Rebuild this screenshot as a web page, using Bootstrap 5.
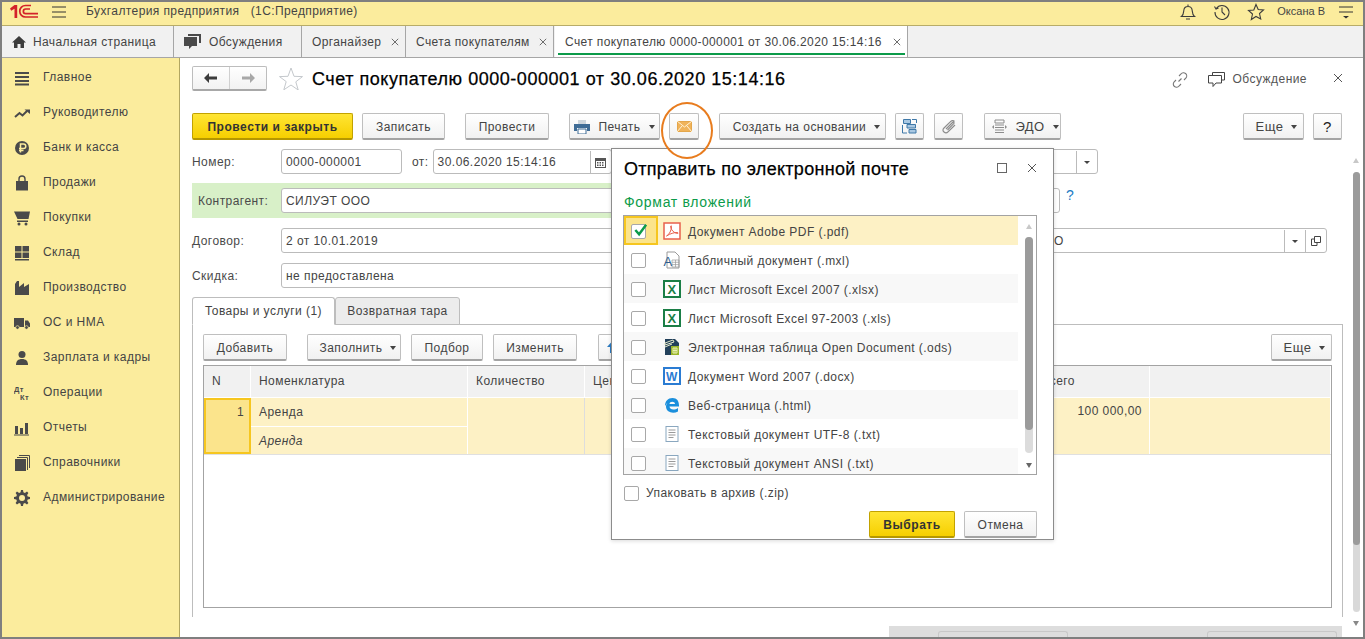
<!DOCTYPE html>
<html lang="ru">
<head>
<meta charset="utf-8">
<title>Счет покупателю</title>
<link rel="stylesheet" href="https://cdn.jsdelivr.net/npm/bootstrap@5.3.0/dist/css/bootstrap.min.css">
<style>
html,body{height:100%;overflow:hidden}
body{font-family:"Liberation Sans",Arial,sans-serif;font-size:12px;letter-spacing:.45px;color:#444;background:#fff;line-height:1.2}
.win{height:639px;width:1365px;border:2px solid #7f7f7f;overflow:hidden;position:relative}
.topbar{height:24px;background:#fbec9d;border-bottom:1px solid #b8ac68;font-size:12px;padding:0 0 4px 8px;letter-spacing:.4px}
.logo1c{width:28px;height:15px}
.burger{width:14px;height:12px;margin:0 20px 0 14px}
.ttl{white-space:pre}
.uname{margin:0 14px 0 12px;letter-spacing:0;font-size:11px}
.ticon{width:18px;height:18px;margin-left:16px;color:#3c3c3c}
.menui{margin-right:10px}
.tabbar{height:32px;background:#f1f1f1;border-bottom:1px solid #a6a6a6;font-size:12px;letter-spacing:.38px}
.tabi{height:31px;border-right:1px solid #a6a6a6;padding:1px 0 0 10px;position:relative;white-space:nowrap}
.t1{width:172px}.t2{width:128px}.t3{width:104px}.t4{width:148px}
.t5{width:353px;background:#fff;margin-left:1px;padding-left:10px}
.t5::after{content:"";position:absolute;left:3px;right:2px;bottom:2px;height:2px;background:#0c9b4a}
.tabi svg{margin-right:8px}
.t1 svg{margin-right:7px}
.tabi svg.tabx{color:#666;margin-left:auto;margin-right:6px;flex:none}
.mainrow{height:579px}
.side{width:178px;flex:none;background:#fbec9d;border-right:1px solid #b2a661;padding-top:2px}
.sitem{height:35px;padding-left:12px;font-size:12px;white-space:nowrap}
.sitem svg{width:16px;height:16px;margin-right:13px;color:#4a4a4a;flex:none}
.work{width:1183px;padding-left:12px;position:relative;flex:none}
.hdr{height:25px;margin-top:8px;width:1151px}
.navgrp{width:75px;height:25px;border:1px solid #bdbdbd;border-bottom:2px solid #a8a8a8;border-radius:2px;background:linear-gradient(#fff,#f2f2f2)}
.navgrp>span{flex:1}
.navgrp>span+span{border-left:1px solid #d0d0d0}
.star{width:24px;height:23px;margin:0 9px 0 12px}
.doctitle{font-size:18px;color:#000;font-weight:400;-webkit-text-stroke:.25px #000;letter-spacing:.54px;margin:1px 0 0;white-space:nowrap;line-height:25px}
.hright{margin:2px 0 0 auto;color:#555}
.hright svg{flex:none}
.lnk{margin-right:20px}
.closex{margin:-3px 0 0 26px}
.btb{margin-top:22px;height:27px;width:1150px}
.bt1.btn{--bs-btn-padding-x:0;--bs-btn-padding-y:0;--bs-btn-font-size:12px;--bs-btn-line-height:1;--bs-btn-color:#444;--bs-btn-border-radius:2px;letter-spacing:.45px;height:27px;padding-top:1px;border:1px solid #bfbfbf;border-bottom:2px solid #a3a3a3;background:linear-gradient(#fff,#f1f1f1);display:inline-flex;align-items:center;justify-content:center;flex:none;white-space:nowrap}
.bt1.act{background:linear-gradient(#ffe534,#f6cf00);border:1px solid #c2a200;border-bottom:2px solid #b59700;color:#333;font-weight:700;letter-spacing:.55px}
.bt1.pl8{padding-left:8px}
.bt1.big{font-size:13px;padding-left:6px}
.qbtn{font-size:15px;color:#222}
.caretx{width:0;height:0;border:solid transparent;border-width:4px 3.5px 0;border-top-color:#444;margin-left:8px;display:inline-block}
.ml9{margin-left:9px}.ml20{margin-left:20px}.ml10{margin-left:10px}.ml21{margin-left:21px}
.w161{width:161px}.w83{width:83px}.w84{width:84px}.w91{width:91px}.w30{width:30px}.w167{width:167px}.w77{width:77px}.w61{width:61px}.w29{width:29px}.w72{width:72px}.w94{width:94px}.w73{width:73px}.w86{width:86px}
.auto{margin-left:auto}
.frow{margin-top:10px;height:25px;width:1135px}
.fr1{margin-top:9px;width:906px}
.lbl{width:89px;flex:none;color:#4a4a4a;padding-top:1px}
.fld{height:25px;border:1px solid #bbb;border-radius:3px;background:#fff;padding:1px 0 0 4px;color:#444;white-space:nowrap;flex:none;overflow:hidden}
.f120{width:121px}.f170{width:179px}.fsk{width:700px}
.fot{margin:1px 4px 0 10px}
.fbtn{height:100%;width:21px;border-left:1px solid #bbb;margin-left:auto;flex:none;display:flex;align-items:center;justify-content:center}
.fcar{width:0;height:0;border:solid transparent;border-width:3.5px 3px 0;border-top-color:#444}
.band{background:#d8f0c8;height:35px;margin-top:9px;width:848px;position:relative;padding-left:6px}
.band .lbl{width:83px}
.fkon{width:779px}
.qm{color:#1c7cc4;font-size:14px;position:absolute;left:874px;top:4px}
.fdog{width:1046px}
.dtext{width:768px;flex:none}
.tabsrow{margin-top:9px;height:28px;position:relative;z-index:1;font-size:12px}
.tb{height:28px;display:flex;align-items:center;justify-content:center;border:1px solid #bdbdbd;border-radius:3px 3px 0 0}
.tba{width:143px;background:#fff;border-bottom-color:#fff}
.tbb{width:125px;background:#ececec}
.panel{width:1151px;height:293px;border-top:1px solid #bdbdbd;border-left:1px solid #bdbdbd;border-right:1px solid #bdbdbd;margin-top:-1px;padding:9px 10px 0}
.ptb{height:27px}
.upa{margin-right:auto;margin-left:8px}
.bt1.lft{justify-content:flex-start}
.grid{width:1129px;height:243px;border:1px solid #a3a3a3;margin-top:4px;background:#fff}
.ghead{height:31px;background:#f1f1f1;margin-bottom:1px}
.ghead>div{border-right:1px solid #fff;padding-left:8px;height:100%;display:flex;align-items:center;flex:none}
.c1{width:47px}.c2{width:217px}.c3{width:117px}.c4{width:565px}.c5{width:181px}
.grow{height:56px;background:#fdf1c5;position:relative}
.grow>div{flex:none;height:100%;border-right:1px solid #fff}
.gn{background:#fbe48c;border:2px solid #f6c61f!important;text-align:right;padding:5px 5px 0 0}
.gname>div{height:28px;display:flex;align-items:center;padding-left:8px}
.gname>div+div{border-top:1px solid #fff;font-style:italic;padding-top:1px}
.gcol{border-right:1px solid #ddd!important}
.gsum{text-align:right;padding:6px 7px 0 0}
.gline{height:1px;background:#e0e0e0}
.sp72{width:74px;flex:none}
.botbar{position:absolute;left:709px;top:568px;width:453px;height:11px;background:#ddd}
.botbar i{position:absolute;top:5px;width:130px;height:6px;border:1px solid #c8c8c8;border-bottom:0;border-radius:3px 3px 0 0}
.bi1{left:49px}.bi2{left:318px}
.vsb{width:7px;height:100%;position:absolute;left:1173px;top:0}
.arrup,.arrdn{position:absolute;left:0;width:0;height:0;border:solid transparent;border-width:0 3.5px 5px;border-bottom-color:#c8c8c8}
.arrdn{border-width:5px 3.5px 0;border-top-color:#888;border-bottom-color:transparent}
.au1{top:100px}.ad1{top:563px}
.th1,.th2{position:absolute;left:0;width:7px;border-radius:3.5px}
.th1{top:114px;height:373px;background:#9b9b9b;z-index:2}
.th2{top:114px;height:440px;background:#d9d9d9}
.dlg{position:absolute;left:431px;top:90px;width:443px;height:392px;background:#fff;border:1px solid #8c8c8c;padding:0 16px 0 11px;z-index:5;box-shadow:0 1px 4px rgba(0,0,0,.15)}
.dtitle{font-size:18px;color:#000;font-weight:400;-webkit-text-stroke:.25px #000;letter-spacing:.29px;line-height:22px;margin:9px 0 0 1px;white-space:nowrap}
.dhead{height:31px}
.dctl{margin-left:auto;color:#666;margin-top:14px}
.dmax{width:10px;height:10px;border:1px solid #666;margin-right:20px;display:block}
.dsub{color:#0c9b4a;font-size:14px;letter-spacing:.7px;margin:12px 0 0 1px;line-height:20px}
.lst{width:414px;height:260px;border:1px solid #a3a3a3;margin-top:3px;position:relative;overflow:hidden}
.lrow{height:29px;width:394px;font-size:12px;padding:1px 0 0 7px;position:relative}
.lrow:nth-child(even){background:#fff}
.lrow:nth-child(odd){background:#f8f8f8}
.lrow.sel{background:#fdf1c5}
.lrow svg.ic{width:18px;height:18px;margin:0 7px 0 17px;flex:none}
.ltx{padding-top:2px}
.cbx{width:15px;height:15px;border:1px solid #a8a8a8;border-radius:2px;background:#fff;flex:none;position:relative}
.selcell{position:absolute;left:0;top:0;width:34px;height:29px;background:#fbe48c;border:2px solid #f6c61f}
.chk{position:absolute;left:1px;top:-3px;width:15px;height:16px}
.lsb{position:absolute;left:401px;top:0;width:8px;height:258px}
.lsb b{position:absolute;left:0;width:8px;border-radius:4px}
.ls1{top:21px;height:193px;background:#9b9b9b;z-index:1}
.ls2{top:21px;height:216px;background:#dcdcdc}
.lau,.lad{position:absolute;left:1px;width:0;height:0;border:solid transparent}
.lau{top:8px;border-width:0 3px 5px;border-bottom-color:#c8c8c8}
.lad{top:247px;border-width:5px 3px 0;border-top-color:#666}
.zip{margin:10px 0 0 1px;height:16px}
.zip .cbx{margin-right:7px}
.dfoot{margin-top:10px;width:414px}
.circ{position:absolute;left:481px;top:44px;width:52px;height:57px;border:2px solid #e87c1e;border-radius:50%;z-index:6;pointer-events:none}
.gl{font-family:"Liberation Sans",sans-serif;font-weight:700}
</style>
</head>
<body>
<svg width="0" height="0" class="position-absolute">
<defs>
<symbol id="x" viewBox="0 0 10 10"><path d="M1 1l8 8M9 1l-8 8" stroke="currentColor" stroke-width="1.2" fill="none"/></symbol>
<symbol id="ixls" viewBox="0 0 18 18"><rect x="1" y="1" width="16" height="16" fill="#fff" stroke="#1b7e46" stroke-width="2"/><text x="9" y="14" text-anchor="middle" font-size="13" class="gl" fill="#1b7e46">X</text></symbol>
<symbol id="itxt" viewBox="0 0 18 18"><rect x="3" y="1.500" width="12" height="15" fill="#fff" stroke="#8aa7bf"/><path d="M5.500 5h7M5.500 7.500h7M5.500 10h7M5.500 12.500h5" stroke="#9a9a9a"/></symbol>
</defs>
</svg>
<div class="win d-flex flex-column">
  <div class="topbar d-flex align-items-center">
    <svg class="logo1c" viewBox="0 0 28 15"><path d="M0 4.500L4.500 1h2.700v13H4.500V4.800L1.200 6.800z" fill="#d3222a"/><path d="M21 1.500h-5.500a5.700 5.700 0 0 0 0 11.500H28M20 5h-4.300a2.200 2.200 0 0 0 0 4.700H28" fill="none" stroke="#d3222a" stroke-width="1.700"/></svg>
    <svg class="burger" viewBox="0 0 14 12"><path d="M0 1h14M0 6h14M0 11h14" stroke="#333" stroke-width="1"/></svg>
    <span class="ttl">Бухгалтерия предприятия   (1С:Предприятие)</span>
    <div class="ms-auto d-flex align-items-center">
      <svg class="ticon" viewBox="0 0 18 18"><path d="M2.500 13.500c2-1.500 2-3 2.300-6C5 5 6.500 3.500 9 3.500s4 1.500 4.200 4c.3 3 .3 4.500 2.300 6zM9 1.500v2M7 16h4" fill="none" stroke="currentColor" stroke-width="1.100"/></svg>
      <svg class="ticon" viewBox="0 0 18 18"><path d="M3.200 5.500A7 7 0 1 1 2 9M1.500 3.500l1.500 2.500 2.500-1M9 4.500V9l3 3" fill="none" stroke="currentColor" stroke-width="1.100"/></svg>
      <svg class="ticon" viewBox="0 0 18 18"><path d="M9 1.500l2.200 5 5.300.5-4 3.500 1.200 5.500L9 13.500 4.300 16.500l1.200-5.500-4-3.500 5.300-.5z" fill="none" stroke="currentColor" stroke-width="1.100"/></svg>
      <span class="uname">Оксана В</span>
      <svg class="menui" width="14" height="14" viewBox="0 0 14 14"><path d="M0 2h14M0 7h14" stroke="#333"/><path d="M4 11h6l-3 2.500z" fill="#333"/></svg>
    </div>
  </div>
  <div class="tabbar d-flex">
    <div class="tabi t1 d-flex align-items-center"><svg width="14" height="14" viewBox="0 0 14 14"><path d="M7 1L0 7.500h2V13h3.500V9h3v4H12V7.500h2z" fill="#3c3c3c"/></svg><span>Начальная страница</span></div>
    <div class="tabi t2 d-flex align-items-center"><svg width="17" height="16" viewBox="0 0 17 16"><path d="M4 0h13v9h-2V2H4zM0 3h13v9H8l-3 3v-3H0z" fill="#4a4a4a"/></svg><span>Обсуждения</span></div>
    <div class="tabi t3 d-flex align-items-center"><span>Органайзер</span><svg class="tabx" width="8" height="8"><use href="#x"/></svg></div>
    <div class="tabi t4 d-flex align-items-center"><span>Счета покупателям</span><svg class="tabx" width="8" height="8"><use href="#x"/></svg></div>
    <div class="tabi t5 d-flex align-items-center"><span>Счет покупателю 0000-000001 от 30.06.2020 15:14:16</span><svg class="tabx" width="8" height="8"><use href="#x"/></svg></div>
  </div>
  <div class="mainrow d-flex">
    <nav class="side d-flex flex-column">
      <div class="sitem d-flex align-items-center"><svg viewBox="0 0 16 16"><path d="M1 2h14v2H1zM1 6h14v2H1zM1 10h14v2H1zM1 13.500h14v2H1z" fill="currentColor"/></svg>Главное</div>
      <div class="sitem d-flex align-items-center"><svg viewBox="0 0 16 16"><path d="M1 12l4.500-4 3 2.500L13 6" fill="none" stroke="currentColor" stroke-width="2"/><path d="M10.500 4.500H16V9z" fill="currentColor"/></svg>Руководителю</div>
      <div class="sitem d-flex align-items-center"><svg viewBox="0 0 16 16"><circle cx="8" cy="8" r="7" fill="currentColor"/><path d="M6.500 12.500V4h3a2.300 2.300 0 0 1 0 4.600h-4.500M5 10.500h4.500" fill="none" stroke="#fbec9d" stroke-width="1.500"/></svg>Банк и касса</div>
      <div class="sitem d-flex align-items-center"><svg viewBox="0 0 16 16"><path d="M2 6h12v9.500H2z" fill="currentColor"/><path d="M5 7V4a3 3 0 0 1 6 0v3" fill="none" stroke="currentColor" stroke-width="1.400"/></svg>Продажи</div>
      <div class="sitem d-flex align-items-center"><svg viewBox="0 0 16 16"><path d="M0 1.500h16L14.500 9H3.500zM3 10.500h11V12H3z" fill="currentColor"/><circle cx="5" cy="14" r="1.500" fill="currentColor"/><circle cx="12" cy="14" r="1.500" fill="currentColor"/></svg>Покупки</div>
      <div class="sitem d-flex align-items-center"><svg viewBox="0 0 16 16"><path d="M1 1h6.500v5.500H1zM8.500 1H15v5.500H8.500zM1 7.500h6.500V13H1zM8.500 7.500H15V13H8.500zM1 14h14v1.500H1z" fill="currentColor"/></svg>Склад</div>
      <div class="sitem d-flex align-items-center"><svg viewBox="0 0 16 16"><path d="M1 15V4l2-3h2v6l5-4v4l5-3v11z" fill="currentColor"/></svg>Производство</div>
      <div class="sitem d-flex align-items-center"><svg viewBox="0 0 16 16"><path d="M0 3h10v9H0zM11 5.500h3l2 3V12h-5z" fill="currentColor"/><circle cx="3.500" cy="12.500" r="1.800" fill="currentColor" stroke="#fbec9d" stroke-width=".7"/><circle cx="12.500" cy="12.500" r="1.800" fill="currentColor" stroke="#fbec9d" stroke-width=".7"/></svg>ОС и НМА</div>
      <div class="sitem d-flex align-items-center"><svg viewBox="0 0 16 16"><circle cx="8" cy="4.500" r="3.500" fill="currentColor"/><path d="M2 15c0-4 2-6 6-6s6 2 6 6z" fill="currentColor"/></svg>Зарплата и кадры</div>
      <div class="sitem d-flex align-items-center"><svg viewBox="0 0 16 16"><text x="0" y="7" font-size="7.500" class="gl" fill="currentColor">Дт</text><text x="6" y="15" font-size="7.500" class="gl" fill="currentColor">Кт</text></svg>Операции</div>
      <div class="sitem d-flex align-items-center"><svg viewBox="0 0 16 16"><path d="M1 6h3v8H1zM6 8h3v6H6zM11 3h3v11h-3zM0 14.500h15v1H0z" fill="currentColor"/></svg>Отчеты</div>
      <div class="sitem d-flex align-items-center"><svg viewBox="0 0 16 16"><path d="M1 4h11v12H1z" fill="currentColor"/><path d="M3 2.500h10.500V15M5 .5h10.500V13" fill="none" stroke="currentColor"/></svg>Справочники</div>
      <div class="sitem d-flex align-items-center"><svg viewBox="0 0 16 16"><path d="M7 0h2l.4 2.300 1.500.6L13 1.600l1.400 1.400-1.300 2 .6 1.500 2.300.5v2l-2.300.4-.6 1.500 1.300 2.100-1.400 1.400-2.100-1.300-1.500.6L9 16H7l-.4-2.300-1.500-.6-2.100 1.300-1.400-1.400 1.300-2.100-.6-1.500L0 9V7l2.300-.5.6-1.500-1.300-2L3 1.600l2.100 1.300 1.500-.6z" fill="currentColor"/><circle cx="8" cy="8" r="3" fill="#fbec9d"/></svg>Администрирование</div>
    </nav>
    <main class="work">
      <div class="hdr d-flex align-items-center">
        <div class="navgrp d-flex">
          <span class="d-flex align-items-center justify-content-center"><svg width="14" height="10" viewBox="0 0 14 10"><path d="M0 5l5-5v3.500h8v3H5V10z" fill="#3c3c3c"/></svg></span>
          <span class="d-flex align-items-center justify-content-center"><svg width="14" height="10" viewBox="0 0 14 10"><path d="M14 5L9 0v3.500H1v3h8V10z" fill="#a8a8a8"/></svg></span>
        </div>
        <svg class="star" viewBox="0 0 24 23"><path d="M12 1l3 8.300 8.500.3-6.700 5.200 2.400 8.200L12 18l-7.200 4.800 2.400-8.200L.5 9.600 9 9.300z" fill="#fff" stroke="#c4c8cc"/></svg>
        <h1 class="doctitle">Счет покупателю 0000-000001 от 30.06.2020 15:14:16</h1>
        <div class="hright d-flex align-items-center">
          <svg class="lnk" width="16" height="16" viewBox="0 0 16 16"><path d="M6.500 9.500l3-3M7 4l2-2a3 3 0 0 1 5 4l-2 2M9 12l-2 2a3 3 0 0 1-5-4l2-2" fill="none" stroke="#777" stroke-width="1.100"/></svg>
          <svg class="me-2" width="17" height="16" viewBox="0 0 17 16"><path d="M4.500 3V.5h12V8H14M.5 3.500h13V11H8l-3 3.500V11H.5z" fill="#fff" stroke="#444"/></svg>
          <span>Обсуждение</span>
          <svg class="closex" width="10" height="10" viewBox="0 0 10 10"><path d="M1 1l8 8M9 1l-8 8" stroke="#555"/></svg>
        </div>
      </div>
      <div class="btb d-flex">
        <button type="button" class="btn bt1 act w161">Провести и закрыть</button>
        <button type="button" class="btn bt1 w83 ml9">Записать</button>
        <button type="button" class="btn bt1 w84 ml20">Провести</button>
        <button type="button" class="btn bt1 w91 ml20"><svg class="me-2" width="16" height="14" viewBox="0 0 16 14"><path d="M4 0h8v4H4z" fill="#cfd6dc"/><path d="M0 4h16v7h-3V8H3v3H0z" fill="#3f6c96"/><path d="M4 9h8v5H4z" fill="#fff" stroke="#3f6c96"/></svg>Печать<i class="caretx"></i></button>
        <button type="button" class="btn bt1 w30 ml9"><svg width="15" height="11" viewBox="0 0 15 11"><rect width="15" height="11" fill="#f0b35a" stroke="#d89a3c"/><path d="M0 0l7.500 6L15 0M0 11l5-6M15 11l-5-6" fill="none" stroke="#fff3d8"/></svg></button>
        <button type="button" class="btn bt1 w167 ml20 pl8">Создать на основании<i class="caretx"></i></button>
        <button type="button" class="btn bt1 w29 ml9"><svg width="15" height="15" viewBox="0 0 15 15"><path d="M1.500.5h7v4h-7zM5 5.500h8.500v3.500H5zM7 10.500h7v3.500H7z" fill="#a9c8e2" stroke="#3f78a8"/><path d="M.5 6v8H5M10 .5h4.500V4" fill="none" stroke="#3f78a8"/></svg></button>
        <button type="button" class="btn bt1 w29 ml10"><svg width="14" height="15" viewBox="0 0 14 15"><path d="M12.500 2.500c-1-1.200-2.700-1.200-3.700-.2L2 9c-1.500 1.500-1.200 3 0 4s2.700 1.200 4-.2L13 6M4 10l6.500-6.500c1-1 2.200.2 1.200 1.200L5.500 11" fill="none" stroke="#8c8c8c" stroke-width="1.200"/></svg></button>
        <button type="button" class="btn bt1 big w77 ml21"><svg class="me-2" width="15" height="15" viewBox="0 0 15 15"><path d="M3 1h9v3H3zM3 6h9M3 8.500h9M3 11h9M3 13.500h9" fill="none" stroke="#8c8c8c"/><path d="M0 8l2-2v4zM15 8l-2-2v4z" fill="#8c8c8c"/></svg>ЭДО<i class="caretx"></i></button>
        <button type="button" class="btn bt1 big w61 auto">Еще<i class="caretx"></i></button>
        <button type="button" class="btn bt1 w29 ml9"><span class="qbtn">?</span></button>
      </div>
      <div class="frow fr1 d-flex align-items-center">
        <span class="lbl">Номер:</span>
        <div class="fld f120 d-flex align-items-center">0000-000001</div>
        <span class="fot">от:</span>
        <div class="fld f170 d-flex align-items-center">30.06.2020 15:14:16<span class="fbtn"><svg width="11" height="11" viewBox="0 0 11 11"><path d="M0 1h11v10H0z" fill="#555"/><path d="M1 4h9v6H1z" fill="#fff"/><path d="M2 5h1.500v1.500H2zM4.500 5H6v1.500H4.500zM7 5h1.500v1.500H7zM2 7.500h1.500V9H2zM4.500 7.500H6V9H4.500zM7 7.500h1.500V9H7z" fill="#555"/></svg></span></div>
        <div class="fld auto d-flex align-items-center f170"><span class="fbtn"><i class="fcar"></i></span></div>
      </div>
      <div class="band d-flex align-items-center">
        <span class="lbl">Контрагент:</span>
        <div class="fld fkon d-flex align-items-center">СИЛУЭТ ООО</div>
        <span class="qm">?</span>
      </div>
      <div class="frow d-flex align-items-center">
        <span class="lbl">Договор:</span>
        <div class="fld fdog d-flex align-items-center"><span class="dtext">2 от 10.01.2019</span><span>О</span>
          <span class="fbtn"><i class="fcar"></i></span><span class="fbtn ms-0"><svg width="10" height="10" viewBox="0 0 10 10"><path d="M3.500.5h6v6h-6zM3.500 3H.5v6.500H6V7" fill="none" stroke="#444"/></svg></span></div>
      </div>
      <div class="frow d-flex align-items-center">
        <span class="lbl">Скидка:</span>
        <div class="fld fsk d-flex align-items-center">не предоставлена</div>
      </div>
      <div class="tabsrow d-flex">
        <div class="tb tba">Товары и услуги (1)</div>
        <div class="tb tbb">Возвратная тара</div>
      </div>
      <section class="panel">
        <div class="ptb d-flex">
          <button type="button" class="btn bt1 w84">Добавить</button>
          <button type="button" class="btn bt1 w94 ml20 pl8">Заполнить<i class="caretx"></i></button>
          <button type="button" class="btn bt1 w72 ml10">Подбор</button>
          <button type="button" class="btn bt1 w84 ml10">Изменить</button>
          <button type="button" class="btn bt1 lft w84 ml21"><svg class="upa" width="9" height="11" viewBox="0 0 9 11"><path d="M4.500 0L9 5H6v6H3V5H0z" fill="#2b7cc4"/></svg></button>
          <button type="button" class="btn bt1 big w61 auto">Еще<i class="caretx"></i></button>
        </div>
        <div class="grid">
          <div class="ghead d-flex">
            <div class="c1">N</div><div class="c2">Номенклатура</div><div class="c3">Количество</div><div class="c4">Цена<span class="auto">Всего</span><span class="sp72"></span></div><div class="c5"></div>
          </div>
          <div class="grow d-flex">
            <div class="c1 gn">1</div>
            <div class="c2 gname d-flex flex-column"><div>Аренда</div><div>Аренда</div></div>
            <div class="c3 gcol"></div>
            <div class="c4 gsum">100 000,00</div>
            <div class="c5"></div>
          </div>
          <div class="gline"></div>
        </div>
      </section>
      <div class="botbar"><i class="bi1"></i><i class="bi2"></i></div>
      <div class="vsb"><i class="arrup au1"></i><b class="th1"></b><b class="th2"></b><i class="arrdn ad1"></i></div>

      <div class="circ"></div>
      <div class="dlg" role="dialog">
        <div class="dhead d-flex align-items-start">
          <h2 class="dtitle">Отправить по электронной почте</h2>
          <div class="dctl d-flex align-items-center"><i class="dmax"></i><svg width="10" height="10" viewBox="0 0 10 10"><path d="M1 1l8 8M9 1l-8 8" stroke="#555"/></svg></div>
        </div>
        <div class="dsub">Формат вложений</div>
        <div class="lst">
          <div class="lrow sel d-flex align-items-center"><span class="selcell"></span><span class="cbx"><svg class="chk" viewBox="0 0 16 16"><path d="M2.500 8l4 4.500L14 2.500" fill="none" stroke="#0c9b4a" stroke-width="2.600"/></svg></span>
            <svg class="ic" viewBox="0 0 18 18"><rect x="1" y="1" width="16" height="16" fill="#fff" stroke="#e8604c" stroke-width="1.500"/><path d="M3.500 14c3-1.500 5-6 5-9.500 0-1.500-1-1-.8.5.5 3 3 6 6.800 6.500 1 0 1-1-.5-1-3 0-6.500 1-10.500 3.500z" fill="none" stroke="#e8604c"/></svg><span class="ltx">Документ Adobe PDF (.pdf)</span></div>
          <div class="lrow d-flex align-items-center"><span class="cbx"></span>
            <svg class="ic" viewBox="0 0 18 18"><path d="M4 1h8l4 4v12H4z" fill="#fff" stroke="#9a9a9a"/><path d="M9 9h7v7H9zM9 11.300h7M9 13.600h7M12.500 9v7" fill="none" stroke="#9a9a9a" stroke-width=".7"/><text x="0.500" y="15" font-size="13" font-family="Liberation Sans" fill="#2f5f8f">A</text></svg><span class="ltx">Табличный документ (.mxl)</span></div>
          <div class="lrow d-flex align-items-center"><span class="cbx"></span><svg class="ic"><use href="#ixls"/></svg><span class="ltx">Лист Microsoft Excel 2007 (.xlsx)</span></div>
          <div class="lrow d-flex align-items-center"><span class="cbx"></span><svg class="ic"><use href="#ixls"/></svg><span class="ltx">Лист Microsoft Excel 97-2003 (.xls)</span></div>
          <div class="lrow d-flex align-items-center"><span class="cbx"></span>
            <svg class="ic" viewBox="0 0 18 18"><path d="M2 1h10l4 4v12H2z" fill="#22405a"/><path d="M8 8h8v9H8z" fill="#9ab52a"/><path d="M2 5l8-3 1 2-9 3zM2 9l7-3" stroke="#e4e8c8" fill="none"/><path d="M10 10h4v5h-4zM12 10v5M10 12.500h4" fill="none" stroke="#e8f0b0"/></svg><span class="ltx">Электронная таблица Open Document (.ods)</span></div>
          <div class="lrow d-flex align-items-center"><span class="cbx"></span>
            <svg class="ic" viewBox="0 0 18 18"><rect x="1" y="1" width="16" height="16" fill="#fff" stroke="#2b7cd3" stroke-width="2"/><text x="9" y="13.500" text-anchor="middle" font-size="12" class="gl" fill="#2b7cd3">W</text></svg><span class="ltx">Документ Word 2007 (.docx)</span></div>
          <div class="lrow d-flex align-items-center"><span class="cbx"></span>
            <svg class="ic" viewBox="0 0 18 18"><path d="M2 10C2 5 5 2 9.500 2c4.500 0 6.500 3 6.500 7.500v1H6.500c.2 3.500 5 4 8.500 1.500v3.500c-5 2.500-11.500 1-12-4.500C3 8.500 4 7 5.500 6 4 7 3 8.500 2 10zM6.500 8H12c0-3-5.500-3-5.500 0z" fill="#1b8fdc"/></svg><span class="ltx">Веб-страница (.html)</span></div>
          <div class="lrow d-flex align-items-center"><span class="cbx"></span><svg class="ic"><use href="#itxt"/></svg><span class="ltx">Текстовый документ UTF-8 (.txt)</span></div>
          <div class="lrow d-flex align-items-center"><span class="cbx"></span><svg class="ic"><use href="#itxt"/></svg><span class="ltx">Текстовый документ ANSI (.txt)</span></div>
          <div class="lsb"><i class="lau"></i><b class="ls1"></b><b class="ls2"></b><i class="lad"></i></div>
        </div>
        <div class="zip d-flex align-items-center"><span class="cbx"></span>Упаковать в архив (.zip)</div>
        <div class="dfoot d-flex">
          <button type="button" class="btn bt1 act w86 auto">Выбрать</button>
          <button type="button" class="btn bt1 w73 ml9">Отмена</button>
        </div>
      </div>
    </main>
  </div>
</div>
</body>
</html>
